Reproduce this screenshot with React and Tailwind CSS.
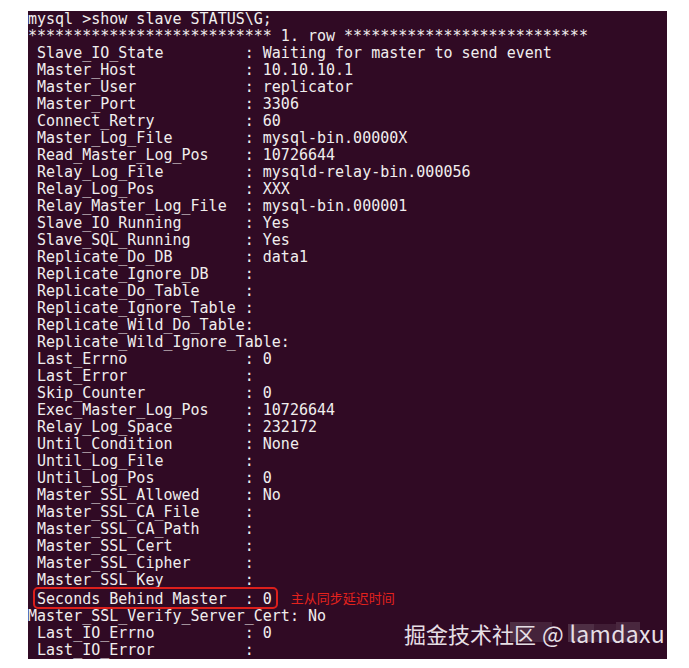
export default function App() {
  const rows = [
    ["Slave_IO_State", "Waiting for master to send event"],
    ["Master_Host", "10.10.10.1"],
    ["Master_User", "replicator"],
    ["Master_Port", "3306"],
    ["Connect_Retry", "60"],
    ["Master_Log_File", "mysql-bin.00000X"],
    ["Read_Master_Log_Pos", "10726644"],
    ["Relay_Log_File", "mysqld-relay-bin.000056"],
    ["Relay_Log_Pos", "XXX"],
    ["Relay_Master_Log_File", "mysql-bin.000001"],
    ["Slave_IO_Running", "Yes"],
    ["Slave_SQL_Running", "Yes"],
    ["Replicate_Do_DB", "data1"],
    ["Replicate_Ignore_DB", ""],
    ["Replicate_Do_Table", ""],
    ["Replicate_Ignore_Table", ""],
    ["Replicate_Wild_Do_Table", ""],
    ["Replicate_Wild_Ignore_Table", ""],
    ["Last_Errno", "0"],
    ["Last_Error", ""],
    ["Skip_Counter", "0"],
    ["Exec_Master_Log_Pos", "10726644"],
    ["Relay_Log_Space", "232172"],
    ["Until_Condition", "None"],
    ["Until_Log_File", ""],
    ["Until_Log_Pos", "0"],
    ["Master_SSL_Allowed", "No"],
    ["Master_SSL_CA_File", ""],
    ["Master_SSL_CA_Path", ""],
    ["Master_SSL_Cert", ""],
    ["Master_SSL_Cipher", ""],
    ["Master_SSL_Key", ""],
  ];

  // name padded so the colon lands on column 24
  const fmt = (name, value) => {
    const left = (" " + name).padEnd(24, " ");
    return left + ": " + value;
  };

  const stars = "*".repeat(27);

  return (
    <div className="w-[689px] h-[668px] bg-white pl-[28px] pt-[11px]">
      <div
        className="relative w-[639px] h-[648px] overflow-hidden bg-[#300a24] text-[#f0eeee] text-[15px] leading-[17px] whitespace-pre"
        style={{ fontFamily: '"DejaVu Sans Mono", "Liberation Mono", monospace' }}
      >
        <div>mysql &gt;show slave STATUS\G;</div>
        <div>{stars + " 1. row " + stars}</div>
        {rows.map(([n, v]) => (
          <div key={n}>{fmt(n, v)}</div>
        ))}
        <div>
          {" "}
          <span className="relative">
            {"Seconds_Behind_Master  : 0"}
            <span className="absolute -left-[4px] -right-[6px] -top-[3px] -bottom-[1px] rounded-[5px] border-2 border-[#dc1f1c]" />
          </span>
          <span
            className="ml-[19px] text-[13px] text-[#e3221d] align-[1px]"
            style={{ fontFamily: '"Noto Sans CJK SC", sans-serif' }}
          >
            主从同步延迟时间
          </span>
        </div>
        <div>Master_SSL_Verify_Server_Cert: No</div>
        <div>{fmt("Last_IO_Errno", "0")}</div>
        <div>{fmt("Last_IO_Error", "")}</div>

        {/* mosaic patches behind the watermark */}
        <div className="absolute left-[482px] top-[611px] flex items-start">
          <div className="w-[20px] h-[20px] bg-white/15" />
          <div className="w-[22px] h-[20px] bg-white/10" />
          <div className="w-[16px] h-[20px]" />
          <div className="w-[26px] h-[18px] mt-[2px] bg-white/15" />
          <div className="w-[22px] h-[18px] mt-[2px] bg-white/8" />
          <div className="w-[24px] h-[20px] bg-white/12" />
        </div>
        <div
          className="absolute left-[376px] top-[608px] flex items-baseline text-[#e6dfe5] leading-[28px] whitespace-nowrap"
          style={{ fontFamily: '"Noto Sans CJK SC", "Noto Sans", sans-serif' }}
        >
          <span className="text-[22px]">掘金技术社区</span>
          <span className="text-[23px] ml-[6px] tracking-[0.3px]">@ lamdaxu</span>
        </div>
      </div>
    </div>
  );
}
